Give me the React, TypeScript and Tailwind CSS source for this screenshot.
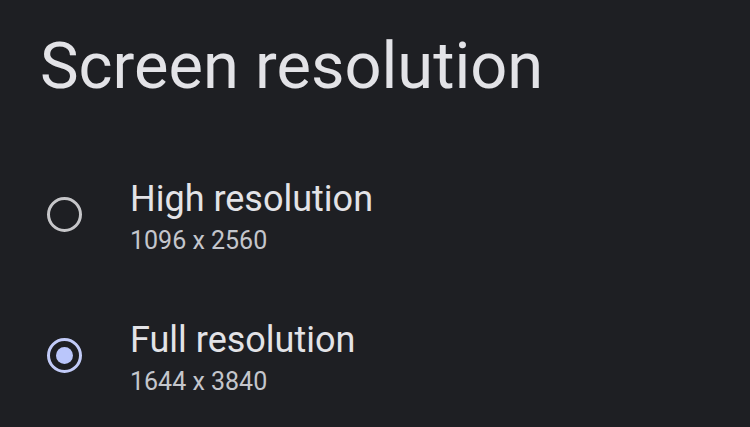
import { useState } from "react";

type Option = {
  id: string;
  label: string;
  size: string;
};

const options: Option[] = [
  { id: "high", label: "High resolution", size: "1096 x 2560" },
  { id: "full", label: "Full resolution", size: "1644 x 3840" },
];

const Radio = ({ checked }: { checked: boolean }) => (
  <div
    className={`mt-[18px] flex h-[35px] w-[35px] shrink-0 items-center justify-center rounded-full border-[3px] ${
      checked ? "border-[#c2cbf8]" : "border-[#c6c6c9]"
    }`}
  >
    {checked && <div className="h-[17px] w-[17px] rounded-full bg-[#bac6fb]"></div>}
  </div>
);

export default function App() {
  const [selected, setSelected] = useState("full");

  return (
    <div
      className="h-[427px] w-[750px] overflow-hidden bg-[#1e1f23]"
      style={{ fontFamily: "Roboto, 'Noto Sans', sans-serif" }}
    >
      <h1 className="pl-[40px] pt-[30px] text-[65px] leading-[72px] text-[#e3e3e7]">
        Screen resolution
      </h1>
      <div className="mt-[77px] flex flex-col gap-[64px]">
        {options.map((opt) => (
          <button
            key={opt.id}
            type="button"
            onClick={() => setSelected(opt.id)}
            className="flex items-start gap-[48px] pl-[47px] text-left"
          >
            <Radio checked={selected === opt.id} />
            <div className="flex flex-col gap-[7px]">
              <span className="text-[36px] leading-[40px] text-[#e3e3e7]">{opt.label}</span>
              <span className="text-[25px] leading-[30px] text-[#c4c6cc]">{opt.size}</span>
            </div>
          </button>
        ))}
      </div>
    </div>
  );
}
